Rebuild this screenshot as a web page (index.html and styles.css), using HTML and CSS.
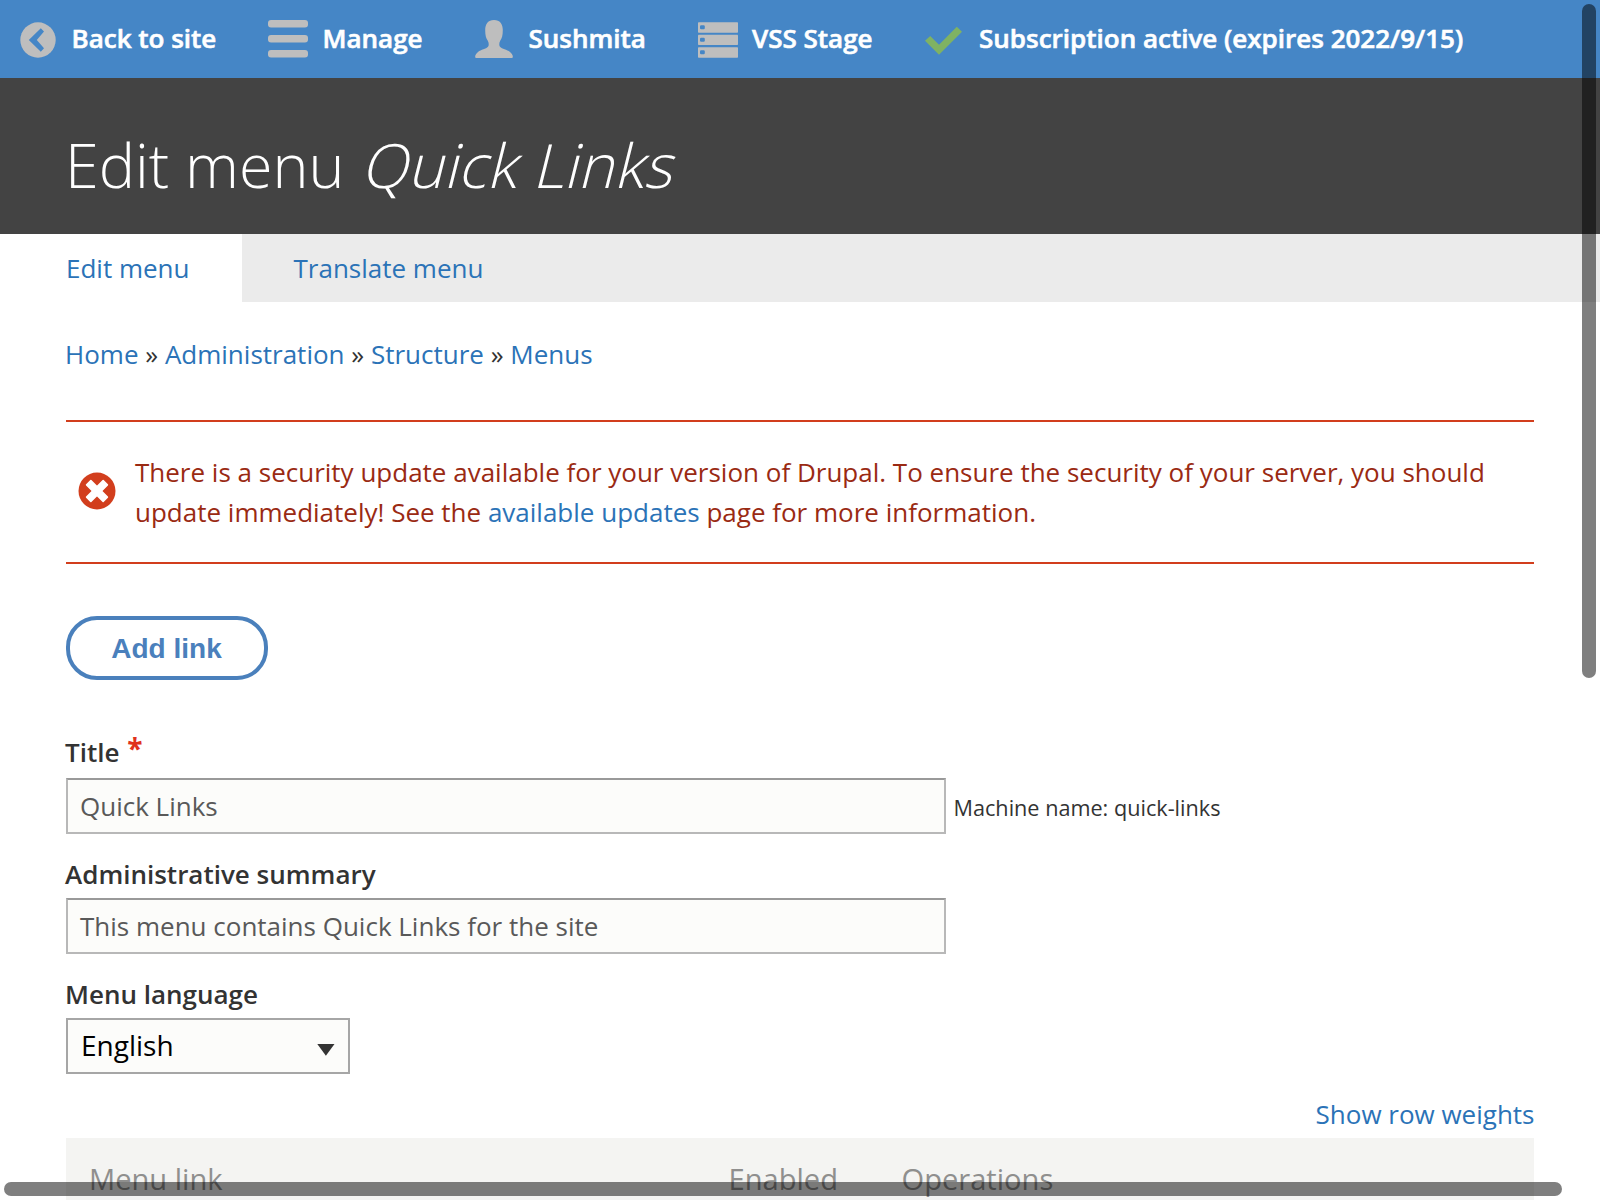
FILE: index.html
```html
<!DOCTYPE html>
<html lang="en">
<head>
<meta charset="utf-8">
<title>Edit menu Quick Links</title>
<link rel="stylesheet" href="styles.css">
</head>
<body>
<nav class="toolbar">
  <a class="tool tool-back"><svg class="icon" width="36" height="36" viewBox="0 0 36 36"><circle cx="18" cy="18" r="17.7" fill="#bebebe"/><path d="M20.800 6.200 8.800 18 20.800 29.800 24 26.200 16.800 18 24 9.600z" fill="#4586c6"/></svg><span class="tool-label">Back to site</span></a>
  <a class="tool tool-manage"><svg class="icon" width="40" height="38" viewBox="0 0 40 38" fill="#bebebe"><rect width="40" height="7.6" rx="3"/><rect y="15" width="40" height="7.6" rx="3"/><rect y="30" width="40" height="7.6" rx="3"/></svg><span class="tool-label">Manage</span></a>
  <a class="tool tool-user"><svg class="icon" width="38" height="38" viewBox="0 0 38 38" fill="#bebebe"><path d="M19 0C13 0 10.2 4 10.2 10C10.2 15 11 18.500 12.800 20.800C14 23 14 25.500 13 26.800C11 29 6 29.500 3 32C.8 33.800 0 35.500 .2 37.200Q.3 38 1.200 38H36.800Q37.700 38 37.800 37.200C38 35.500 37.200 33.800 35 32C32 29.500 27 29 25 26.800C24 25.500 24 23 25.200 20.800C27 18.500 27.800 15 27.800 10C27.800 4 25 0 19 0z"/></svg><span class="tool-label">Sushmita</span></a>
  <a class="tool tool-server"><svg class="icon" width="40" height="36" viewBox="0 0 40 36" fill="#bebebe"><rect y=".3" width="40" height="10.500" rx=".7"/><rect y="12.800" width="40" height="10.200" rx=".7"/><rect y="25.200" width="40" height="10.500" rx=".7"/><g fill="#4586c6"><rect x="2" y="3.200" width="4.800" height="4" rx="1.200"/><rect x="2" y="15.800" width="4.800" height="4" rx="1.200"/><rect x="2" y="28.200" width="4.800" height="4" rx="1.200"/></g></svg><span class="tool-label">VSS Stage</span></a>
  <a class="tool tool-status"><svg class="icon" width="38" height="30" viewBox="0 0 38 30"><path d="M0 14.800 5.200 9.900 14 18.700 31.800.7 37 5.800 14 28.700z" fill="#7fb263"/></svg><span class="tool-label">Subscription active (expires 2022/9/15)</span></a>
</nav>
<header class="page-header"><h1 class="page-title">Edit menu <span class="placeholder">Quick Links</span></h1></header>
<nav class="tabs"><a class="tab tab-active">Edit menu</a><a class="tab">Translate menu</a></nav>
<main class="content">
  <nav class="breadcrumb"><a>Home</a> » <a>Administration</a> » <a>Structure</a> » <a>Menus</a></nav>
  <section class="message">
    <svg class="message-icon" width="38" height="38" viewBox="0 0 38 38"><circle cx="19" cy="19" r="18.500" fill="#d23e1d"/><g fill="#fff"><rect x="6.500" y="15.200" width="25" height="7.600" rx=".8" transform="rotate(45 19 19)"/><rect x="6.500" y="15.200" width="25" height="7.600" rx=".8" transform="rotate(-45 19 19)"/></g></svg>
    <p class="message-text">There is a security update available for your version of Drupal. To ensure the security of your server, you should<br>update immediately! See the <a>available updates</a> page for more information.</p>
  </section>
  <a class="button">Add link</a>
  <form class="form">
    <div class="field">
      <label class="label label-title">Title <span class="required">*</span></label>
      <div class="field-row"><div class="input">Quick Links</div><span class="machine-name">Machine name: quick-links</span></div>
    </div>
    <div class="field">
      <label class="label">Administrative summary</label>
      <div class="input">This menu contains Quick Links for the site</div>
    </div>
    <div class="field">
      <label class="label">Menu language</label>
      <div class="select"><span>English</span><svg width="18" height="12" viewBox="0 0 18 12"><path d="M.3 0h17.200L8.900 11.700z" fill="#333"/></svg></div>
    </div>
  </form>
  <div class="weights"><a>Show row weights</a></div>
  <div class="table-head"><span>Menu link</span><span>Enabled</span><span>Operations</span></div>
</main>
<div class="scrollbar scrollbar-y"></div>
<div class="scrollbar scrollbar-x"></div>
</body>
</html>
```
FILE: styles.css
```css
* { box-sizing: border-box; }
html, body { margin: 0; height: 1200px; overflow: hidden; }
body {
  position: relative;
  background: #fff;
  color: #333;
  font: 26px/40px "Open Sans", "Noto Sans", sans-serif;
}
a { color: #2b73b7; text-decoration: none; white-space: nowrap; }

.toolbar { display: flex; height: 78px; background: #4586c6; }
.tool { display: flex; align-items: flex-start; flex: none; color: #fff; }
.tool .icon { flex: none; display: block; }
.tool-label { line-height: 76px; font-weight: 600; -webkit-text-stroke: .6px currentColor; }
.tool-back { width: 268px; padding-left: 20px; gap: 15.5px; }
.tool-back .icon { margin-top: 22px; }
.tool-manage { width: 207px; gap: 14.5px; }
.tool-manage .icon { margin-top: 20px; }
.tool-user { width: 223px; gap: 15.5px; }
.tool-user .icon { margin-top: 20px; }
.tool-server { width: 227px; gap: 14px; }
.tool-server .icon { margin-top: 22px; }
.tool-status { gap: 16px; }
.tool-status .icon { margin-top: 26px; }

.page-header { height: 156px; padding: 47px 65px 0; background: #434343; }
.page-title { margin: 0; color: #fff; font-size: 61px; line-height: 80px; font-weight: 300; white-space: nowrap; }
/* Slanted roman letters, sheared about the baseline */
.placeholder { display: inline-block; transform: skewX(-14deg); transform-origin: 0 64px; letter-spacing: .15px; }

.tabs { display: flex; height: 68px; background: #ebebeb; }
.tab { padding: 0 51.5px; line-height: 68px; }
.tab-active { width: 242px; padding-left: 66px; padding-right: 0; background: #fff; }

.content { padding: 32px 66px 0; }
.breadcrumb { margin-left: -1px; white-space: nowrap; }
.message {
  display: flex;
  height: 144px;
  margin-top: 46px;
  padding: 30px 0 0 12px;
  border-top: 2px solid #d23e1d;
  border-bottom: 2px solid #d23e1d;
  color: #9a2a13;
}
.message-icon { flex: none; margin: 20px 19px 0 0; }
.message-text { margin: 0; white-space: nowrap; }
.button {
  display: block;
  width: 202px;
  height: 64px;
  margin-top: 52px;
  padding-right: 1px;
  border: 4px solid #4a80bc;
  border-radius: 31px;
  color: #4a80bc;
  font: bold 28px/58px "Liberation Sans", Arial, sans-serif;
  text-align: center;
}

.form { display: flex; flex-direction: column; gap: 20px; margin-top: 52px; }
.label { display: block; height: 40px; margin: 0 0 4px -1px; font-weight: 600; }
.label-title { margin-bottom: 6px; }
.required { margin-left: 1px; color: #e0321c; font-size: 28px; font-weight: 700; vertical-align: 3px; line-height: 1; }
.field-row { display: flex; height: 56px; }
.input {
  width: 880px;
  height: 56px;
  padding: 0 12px;
  border: 2px solid #b8b8b8;
  border-top-color: #999;
  background: #fcfcfa;
  color: #595959;
  line-height: 52px;
}
.machine-name { padding-left: 7.5px; font-size: 21.65px; line-height: 59px; }
.select {
  display: flex;
  justify-content: space-between;
  width: 284px;
  height: 56px;
  padding: 0 13px;
  border: 2px solid #a6a6a6;
  background: #fcfcfa;
  color: #000;
  font-size: 28px;
  line-height: 50px;
}
.select svg { margin-top: 24px; }
.weights { margin: 20px -.5px 0 0; text-align: right; }
.table-head {
  display: grid;
  grid-template-columns: 639.5px 173px 1fr;
  height: 62px;
  margin-top: 4px;
  padding: 21px 23px 0;
  overflow: hidden;
  background: #f4f4f2;
  color: #8f8f8e;
  font-size: 29.1px;
}

/* Overlay scrollbars float above the page */
.scrollbar { position: absolute; border-radius: 7px; background: rgba(0, 0, 0, .5); }
.scrollbar-y { top: 4px; right: 4px; width: 14px; height: 674px; }
.scrollbar-x { left: 4px; bottom: 4px; width: 1558px; height: 14px; }
```
